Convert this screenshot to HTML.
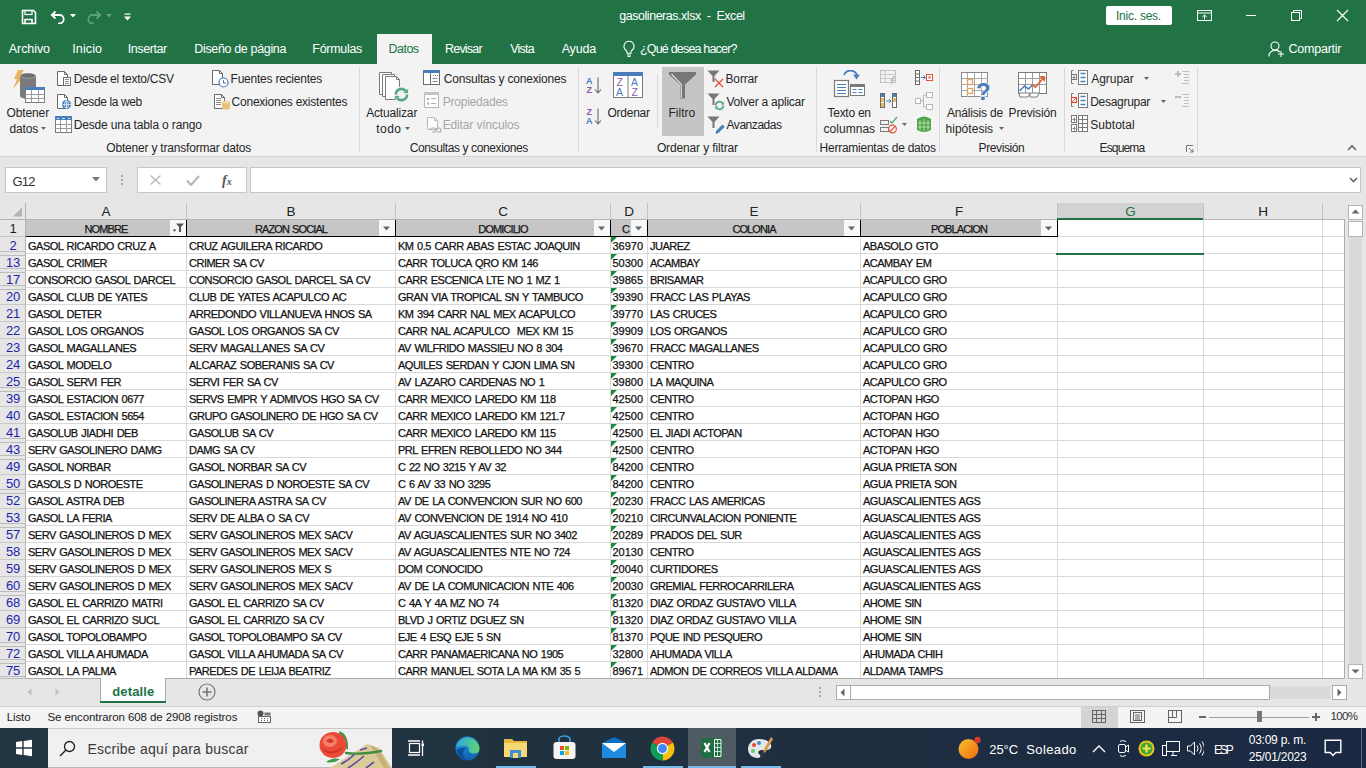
<!DOCTYPE html><html><head><meta charset="utf-8"><style>
*{margin:0;padding:0;box-sizing:border-box}
html,body{width:1366px;height:768px;overflow:hidden;background:#fff;font-family:"Liberation Sans", sans-serif}
.a{position:absolute}
.t{position:absolute;white-space:pre;line-height:1}
.c{position:absolute;white-space:pre;line-height:1;overflow:hidden;font-size:11px;color:#111;-webkit-text-stroke:0.25px #111;letter-spacing:-0.5px;word-spacing:1px}
</style></head><body>
<div class="a" style="left:0px;top:0px;width:1366px;height:64px;background:#217346;"></div>
<svg class="a" style="left:21px;top:9px;" width="16" height="16" viewBox="0 0 16 16"><path d="M1.5 1.5h11l2 2v11h-13z" fill="none" stroke="#fff" stroke-width="1.6"/><rect x="4" y="1.5" width="7" height="4" fill="none" stroke="#fff" stroke-width="1.2"/><path d="M4 14.5v-4h7v4" fill="none" stroke="#fff" stroke-width="1.6"/></svg>
<svg class="a" style="left:50px;top:9px;" width="17" height="15" viewBox="0 0 17 15"><path d="M5.5 2.5L1.8 6l3.7 3.5" fill="none" stroke="#fff" stroke-width="1.8"/><path d="M2 6h7.5a4.2 4.2 0 0 1 0 8.4H8" fill="none" stroke="#fff" stroke-width="1.8"/></svg>
<svg class="a" style="left:70px;top:14px;" width="7" height="4" viewBox="0 0 7 4"><path d="M0 0h6l-3 3.5z" fill="#fff"/></svg>
<svg class="a" style="left:85px;top:9px;" width="17" height="15" viewBox="0 0 17 15"><path d="M11.5 2.5L15.2 6l-3.7 3.5" fill="none" stroke="#5f9f7c" stroke-width="1.8"/><path d="M15 6H7.5a4.2 4.2 0 0 0 0 8.4H9" fill="none" stroke="#5f9f7c" stroke-width="1.8"/></svg>
<svg class="a" style="left:106px;top:14px;" width="7" height="4" viewBox="0 0 7 4"><path d="M0 0h6l-3 3.5z" fill="#5f9f7c"/></svg>
<svg class="a" style="left:124px;top:13px;" width="7" height="8" viewBox="0 0 7 8"><rect x="0.5" y="0.5" width="6" height="1.2" fill="#fff"/><path d="M0 3.5h7l-3.5 4z" fill="#fff"/></svg>
<div class="t" style="left:619.3px;top:10px;font-size:12.5px;color:#fff;letter-spacing:-0.5px;letter-spacing:-0.468px;">gasolineras.xlsx  -  Excel</div>
<div class="a" style="left:1106px;top:6px;width:66px;height:19px;background:#fff;border-radius:2px"></div>
<div class="t" style="left:1116px;top:10px;font-size:12px;color:#217346;letter-spacing:-0.1px;letter-spacing:-0.244px;">Inic. ses.</div>
<svg class="a" style="left:1197px;top:10px;" width="15" height="11" viewBox="0 0 15 11"><rect x="0.5" y="0.5" width="14" height="10" fill="none" stroke="#fff"/><path d="M0.5 3h14" stroke="#fff"/><path d="M7.5 9.5V5M5.3 7.2l2.2-2.2 2.2 2.2" fill="none" stroke="#fff"/></svg>
<div class="a" style="left:1246px;top:15px;width:10px;height:1px;background:#fff;"></div>
<svg class="a" style="left:1291px;top:10px;" width="12" height="11" viewBox="0 0 12 11"><rect x="0.5" y="2.5" width="8" height="8" fill="none" stroke="#fff"/><path d="M2.5 2.5V0.5h8v8h-2" fill="none" stroke="#fff"/></svg>
<svg class="a" style="left:1336px;top:9px;" width="13" height="13" viewBox="0 0 13 13"><path d="M1 1L12 12M12 1L1 12" stroke="#fff" stroke-width="1.1"/></svg>
<div class="a" style="left:377px;top:34px;width:55px;height:30px;background:#f3f3f3;"></div>
<div class="t" style="left:8.8px;top:43px;font-size:12.5px;color:#fff;;letter-spacing:-0.067px;">Archivo</div>
<div class="t" style="left:72.2px;top:43px;font-size:12.5px;color:#fff;;letter-spacing:0.140px;">Inicio</div>
<div class="t" style="left:127.8px;top:43px;font-size:12.5px;color:#fff;;letter-spacing:-0.429px;">Insertar</div>
<div class="t" style="left:194.3px;top:43px;font-size:12.5px;color:#fff;;letter-spacing:-0.347px;">Diseño de página</div>
<div class="t" style="left:312.3px;top:43px;font-size:12.5px;color:#fff;;letter-spacing:-0.300px;">Fórmulas</div>
<div class="t" style="left:445px;top:43px;font-size:12.5px;color:#fff;;letter-spacing:-0.800px;">Revisar</div>
<div class="t" style="left:510.2px;top:43px;font-size:12.5px;color:#fff;;letter-spacing:-0.775px;">Vista</div>
<div class="t" style="left:561.7px;top:43px;font-size:12.5px;color:#fff;;letter-spacing:-0.175px;">Ayuda</div>
<div class="t" style="left:640px;top:43px;font-size:12.5px;color:#fff;;letter-spacing:-0.812px;">¿Qué desea hacer?</div>
<div class="t" style="left:388.5px;top:43px;font-size:12.5px;color:#217346;;letter-spacing:-0.525px;">Datos</div>
<svg class="a" style="left:622px;top:40px;" width="14" height="17" viewBox="0 0 14 17"><path d="M7 1.2a5 5 0 0 0-3 9c.6.5 1 1.2 1 2v1h4v-1c0-.8.4-1.5 1-2a5 5 0 0 0-3-9z" fill="none" stroke="#fff" stroke-width="1.1"/><path d="M5 15h4M5.5 16.5h3" stroke="#fff" stroke-width="1"/></svg>
<svg class="a" style="left:1268px;top:41px;" width="17" height="17" viewBox="0 0 17 17"><circle cx="7" cy="5" r="4" fill="none" stroke="#fff" stroke-width="1.1"/><path d="M0.8 15.5a6.5 6.5 0 0 1 11-4.5" fill="none" stroke="#fff" stroke-width="1.1"/><path d="M13 10v6M10 13h6" stroke="#fff" stroke-width="1.1"/></svg>
<div class="t" style="left:1288.6px;top:43px;font-size:12.5px;color:#fff;letter-spacing:-0.2px;letter-spacing:-0.250px;">Compartir</div>
<div class="a" style="left:0px;top:64px;width:1366px;height:92px;background:#f3f3f3;"></div>
<div class="a" style="left:0px;top:156px;width:1366px;height:1px;background:#d4d4d4;"></div>
<div class="a" style="left:359px;top:68px;width:1px;height:84px;background:#d8d8d8;"></div>
<div class="a" style="left:578px;top:68px;width:1px;height:84px;background:#d8d8d8;"></div>
<div class="a" style="left:816px;top:68px;width:1px;height:84px;background:#d8d8d8;"></div>
<div class="a" style="left:939px;top:68px;width:1px;height:84px;background:#d8d8d8;"></div>
<div class="a" style="left:1064px;top:68px;width:1px;height:84px;background:#d8d8d8;"></div>
<div class="a" style="left:1197px;top:68px;width:1px;height:84px;background:#d8d8d8;"></div>
<div class="a" style="left:657px;top:74px;width:1px;height:55px;background:#d8d8d8;"></div>
<div class="t" style="left:106.3px;top:142px;font-size:12px;color:#262626;letter-spacing:-0.25px;letter-spacing:-0.196px;">Obtener y transformar datos</div>
<div class="t" style="left:409.7px;top:142px;font-size:12px;color:#262626;letter-spacing:-0.25px;letter-spacing:-0.386px;">Consultas y conexiones</div>
<div class="t" style="left:656.9px;top:142px;font-size:12px;color:#262626;letter-spacing:-0.25px;letter-spacing:-0.134px;">Ordenar y filtrar</div>
<div class="t" style="left:819.6px;top:142px;font-size:12px;color:#262626;letter-spacing:-0.25px;letter-spacing:-0.250px;">Herramientas de datos</div>
<div class="t" style="left:978.6px;top:142px;font-size:12px;color:#262626;letter-spacing:-0.25px;letter-spacing:-0.400px;">Previsión</div>
<div class="t" style="left:1099.6px;top:142px;font-size:12px;color:#262626;letter-spacing:-0.25px;letter-spacing:-0.867px;">Esquema</div>
<svg class="a" style="left:1186px;top:145px;" width="8" height="8" viewBox="0 0 8 8"><path d="M0.5 7V0.5H7" fill="none" stroke="#777"/><path d="M3 3l4 4M7 4v3H4" fill="none" stroke="#777"/></svg>
<svg class="a" style="left:1347px;top:144px;" width="10" height="7" viewBox="0 0 10 7"><path d="M1 6l4-4 4 4" fill="none" stroke="#666" stroke-width="1.6"/></svg>
<svg class="a" style="left:11px;top:69px;" width="36" height="35" viewBox="0 0 36 35"><path d="M7 1h6l-4 7h3L2 20l4-10H3z" fill="#e8b55e"/><path d="M9 7v20a8 3 0 0 0 16 0V7z" fill="#7a7a7a"/><ellipse cx="17" cy="7" rx="8" ry="3" fill="#9a9a9a"/><ellipse cx="17" cy="6.6" rx="7" ry="2.2" fill="#6e6e6e"/><rect x="14.5" y="18.5" width="19" height="15" fill="#fff" stroke="#7a7a7a"/><rect x="14" y="18" width="20" height="3" fill="#4a7ebb"/><path d="M14.5 25.5h19M14.5 29.5h19M20.5 21v12.5M27.5 21v12.5" stroke="#9a9a9a" stroke-width="1"/></svg>
<div class="t" style="left:6.6px;top:107px;font-size:12px;color:#262626;letter-spacing:-0.25px;letter-spacing:-0.133px;">Obtener</div>
<div class="t" style="left:9.5px;top:123px;font-size:12px;color:#262626;letter-spacing:-0.25px;letter-spacing:-0.175px;">datos</div>
<svg class="a" style="left:41px;top:127px;" width="6" height="4" viewBox="0 0 6 4"><path d="M0 0h5l-2.5 3z" fill="#666"/></svg>
<svg class="a" style="left:56px;top:70px;" width="16" height="17" viewBox="0 0 16 17"><path d="M1.5 1.5h7l3 3v11h-10z" fill="#fff" stroke="#6a6a6a"/><path d="M8.5 1.5v3h3" fill="none" stroke="#6a6a6a"/><rect x="7.5" y="7.5" width="7" height="8" fill="#fff" stroke="#6a6a6a"/><path d="M9 9.5h4M9 11.5h4M9 13.5h4" stroke="#8a8a8a"/></svg>
<div class="t" style="left:73.7px;top:73px;font-size:12px;color:#262626;letter-spacing:-0.25px;letter-spacing:-0.265px;">Desde el texto/CSV</div>
<svg class="a" style="left:56px;top:93px;" width="16" height="17" viewBox="0 0 16 17"><path d="M1.5 1.5h7l3 3v11h-10z" fill="#fff" stroke="#6a6a6a"/><path d="M8.5 1.5v3h3" fill="none" stroke="#6a6a6a"/><circle cx="10.5" cy="11.5" r="4.5" fill="#4a7ebb"/><path d="M6.5 11.5h8M10.5 7.5v8" stroke="#cfe0f3" stroke-width="1"/><ellipse cx="10.5" cy="11.5" rx="2" ry="3.6" fill="none" stroke="#cfe0f3" stroke-width="0.9"/></svg>
<div class="t" style="left:73.7px;top:96px;font-size:12px;color:#262626;letter-spacing:-0.25px;letter-spacing:-0.382px;">Desde la web</div>
<svg class="a" style="left:55px;top:116px;" width="17" height="17" viewBox="0 0 17 17"><rect x="0.5" y="0.5" width="16" height="16" fill="#fff" stroke="#7a7a7a"/><rect x="0" y="0" width="17" height="4" fill="#4a7ebb"/><path d="M0.5 8.5h16M0.5 12.5h16M5.5 4v12.5M11.5 4v12.5" stroke="#9a9a9a"/><path d="M2 2.5h2M7 2.5h3M13 2.5h2" stroke="#cfe0f3"/></svg>
<div class="t" style="left:73.7px;top:119px;font-size:12px;color:#262626;letter-spacing:-0.25px;letter-spacing:-0.145px;">Desde una tabla o rango</div>
<svg class="a" style="left:211px;top:69px;" width="18" height="19" viewBox="0 0 18 19"><path d="M1.5 1.5h7l3 3v11h-10z" fill="#fff" stroke="#6a6a6a"/><path d="M8.5 1.5v3h3" fill="none" stroke="#6a6a6a"/><circle cx="12.5" cy="13.5" r="4.5" fill="#fff" stroke="#4a7ebb" stroke-width="1.2"/><path d="M12.5 11v3h2.5" fill="none" stroke="#4a7ebb"/></svg>
<div class="t" style="left:230.6px;top:73px;font-size:12px;color:#262626;letter-spacing:-0.25px;letter-spacing:-0.237px;">Fuentes recientes</div>
<svg class="a" style="left:213px;top:93px;" width="17" height="17" viewBox="0 0 17 17"><path d="M1.5 1.5h7l3 3v11h-10z" fill="#fff" stroke="#6a6a6a"/><path d="M8.5 1.5v3h3" fill="none" stroke="#6a6a6a"/><path d="M3 5.5h5M3 7.5h5M3 9.5h5M3 11.5h5" stroke="#8a8a8a"/><path d="M9 9v6a4 1.5 0 0 0 8 0V9z" fill="#e6c27a"/><ellipse cx="13" cy="9" rx="4" ry="1.5" fill="#f0d69a"/></svg>
<div class="t" style="left:231.6px;top:96px;font-size:12px;color:#262626;letter-spacing:-0.25px;letter-spacing:-0.240px;">Conexiones existentes</div>
<svg class="a" style="left:378px;top:71px;" width="32" height="32" viewBox="0 0 32 32"><path d="M1.5 1.5h12v22h-12z" fill="#fff" stroke="#7a7a7a"/><path d="M4.5 3.5h12v22h-12z" fill="#fff" stroke="#7a7a7a"/><path d="M7.5 5.5h11l3 3v20h-14z" fill="#fff" stroke="#7a7a7a"/><path d="M18.5 5.5v3h3" fill="none" stroke="#7a7a7a"/><circle cx="23.5" cy="23.5" r="8" fill="#f3f3f3"/><path d="M17.90 23.50A5.6 5.6 0 0 1 27.79 19.90" fill="none" stroke="#5aa882" stroke-width="2.6"/><path d="M29.85 22.35L30.24 17.84L25.34 21.96z" fill="#5aa882"/><path d="M29.10 23.50A5.6 5.6 0 0 1 19.21 27.10" fill="none" stroke="#5aa882" stroke-width="2.6"/><path d="M17.15 24.65L16.76 29.16L21.66 25.04z" fill="#5aa882"/></svg>
<div class="t" style="left:366.2px;top:107px;font-size:12px;color:#262626;letter-spacing:-0.25px;letter-spacing:-0.167px;">Actualizar</div>
<div class="t" style="left:376.2px;top:123px;font-size:12px;color:#262626;letter-spacing:-0.25px;letter-spacing:0.467px;">todo</div>
<svg class="a" style="left:405px;top:127px;" width="6" height="4" viewBox="0 0 6 4"><path d="M0 0h5l-2.5 3z" fill="#666"/></svg>
<svg class="a" style="left:423px;top:70px;" width="18" height="16" viewBox="0 0 18 16"><rect x="0.5" y="0.5" width="16" height="14" fill="#fff" stroke="#6a6a6a"/><rect x="0" y="0" width="17" height="3" fill="#4a7ebb"/><path d="M7.5 3v12" stroke="#6a6a6a"/><path d="M10 5.5h1M12 5.5h1M14 5.5h1M9.5 8.5h5M9.5 11.5h5" stroke="#8a8a8a"/></svg>
<div class="t" style="left:443.7px;top:73px;font-size:12px;color:#262626;letter-spacing:-0.25px;letter-spacing:-0.190px;">Consultas y conexiones</div>
<svg class="a" style="left:424px;top:92px;" width="16" height="17" viewBox="0 0 16 17"><rect x="0.5" y="0.5" width="14" height="15" fill="#fff" stroke="#b8b8b8"/><rect x="0" y="0" width="15" height="3" fill="#c4c4c4"/><circle cx="4" cy="7" r="1.2" fill="#b0b0b0"/><circle cx="4" cy="11.5" r="1.2" fill="#b0b0b0"/><path d="M7 6.5h5M7 11.5h5" stroke="#b0b0b0"/></svg>
<div class="t" style="left:442.7px;top:96px;font-size:12px;color:#a6a6a6;letter-spacing:-0.25px;letter-spacing:-0.220px;">Propiedades</div>
<svg class="a" style="left:426px;top:116px;" width="16" height="17" viewBox="0 0 16 17"><path d="M1.5 1.5h7l3 3v9h-10z" fill="#fff" stroke="#b8b8b8"/><path d="M8.5 1.5v3h3" fill="none" stroke="#b8b8b8"/><path d="M4 14a2 2 0 0 1 2-2h2a2 2 0 0 1 0 4H6M10 14a2 2 0 0 1 2-2h1a2 2 0 0 1 0 4h-2" fill="none" stroke="#b0b0b0" stroke-width="1.1"/></svg>
<div class="t" style="left:442.7px;top:119px;font-size:12px;color:#a6a6a6;letter-spacing:-0.25px;letter-spacing:-0.136px;">Editar vínculos</div>
<svg class="a" style="left:586px;top:76px;" width="16" height="19" viewBox="0 0 16 19"><text x="0" y="8" font-family="Liberation Sans" font-size="9" font-weight="bold" fill="#4a7ebb">A</text><text x="0.5" y="17" font-family="Liberation Sans" font-size="9" font-weight="bold" fill="#8e58a8">Z</text><path d="M12 1.5v15M9 13.5l3 3.5 3-3.5" fill="none" stroke="#6a6a6a" stroke-width="1.1"/></svg>
<svg class="a" style="left:586px;top:107px;" width="16" height="19" viewBox="0 0 16 19"><text x="0.5" y="8" font-family="Liberation Sans" font-size="9" font-weight="bold" fill="#8e58a8">Z</text><text x="0" y="17" font-family="Liberation Sans" font-size="9" font-weight="bold" fill="#4a7ebb">A</text><path d="M12 1.5v15M9 13.5l3 3.5 3-3.5" fill="none" stroke="#6a6a6a" stroke-width="1.1"/></svg>
<svg class="a" style="left:613px;top:72px;" width="31" height="27" viewBox="0 0 31 27"><rect x="0.5" y="0.5" width="29" height="25" fill="#fff" stroke="#7a7a7a"/><rect x="0" y="0" width="30" height="4" fill="#4a7ebb"/><path d="M15 4v22" stroke="#7a7a7a"/><text x="3.5" y="14" font-family="Liberation Sans" font-size="10.5" fill="#8e58a8">Z</text><text x="3" y="24" font-family="Liberation Sans" font-size="10.5" fill="#4a7ebb">A</text><text x="18" y="14" font-family="Liberation Sans" font-size="10.5" fill="#4a7ebb">A</text><text x="18.5" y="24" font-family="Liberation Sans" font-size="10.5" fill="#8e58a8">Z</text></svg>
<div class="t" style="left:607.5px;top:107px;font-size:12px;color:#262626;letter-spacing:-0.25px;letter-spacing:-0.250px;">Ordenar</div>
<div class="a" style="left:662px;top:67px;width:42px;height:69px;background:#c5c5c5;"></div>
<svg class="a" style="left:668px;top:71px;" width="29" height="29" viewBox="0 0 29 29"><path d="M1 1h27v2.5L17 13.6V27.5h-5V13.6L1 3.5z" fill="#777"/><path d="M3.5 3.2L13.2 13.2V27" fill="none" stroke="#f0f0f0" stroke-width="1.1"/></svg>
<div class="t" style="left:668.4px;top:107px;font-size:12px;color:#262626;letter-spacing:-0.25px;letter-spacing:0.040px;">Filtro</div>
<svg class="a" style="left:707px;top:70px;" width="18" height="18" viewBox="0 0 18 18"><path d="M0.5 0.5h12l-5 5.5v6h-2V6z" fill="#777"/><path d="M8 9l8 8M16 9l-8 8" stroke="#e0533b" stroke-width="1.4"/></svg>
<div class="t" style="left:725.5px;top:73px;font-size:12px;color:#262626;letter-spacing:-0.25px;letter-spacing:-0.150px;">Borrar</div>
<svg class="a" style="left:707px;top:93px;" width="19" height="19" viewBox="0 0 19 19"><path d="M0.5 0.5h12l-5 5.5v6h-2V6z" fill="#777"/><path d="M8.70 12.50A3.8 3.8 0 0 1 15.41 10.06" fill="none" stroke="#5aa882" stroke-width="1.8"/><path d="M16.83 11.74L17.10 8.64L13.73 11.47z" fill="#5aa882"/><path d="M16.30 12.50A3.8 3.8 0 0 1 9.59 14.94" fill="none" stroke="#5aa882" stroke-width="1.8"/><path d="M8.17 13.26L7.90 16.36L11.27 13.53z" fill="#5aa882"/></svg>
<div class="t" style="left:726.5px;top:96px;font-size:12px;color:#262626;letter-spacing:-0.25px;letter-spacing:-0.233px;">Volver a aplicar</div>
<svg class="a" style="left:707px;top:116px;" width="18" height="18" viewBox="0 0 18 18"><path d="M0.5 0.5h12l-5 5.5v6h-2V6z" fill="#777"/><path d="M9.5 14.5l6-6 2.2 2.2-6 6z" fill="#4a7ebb"/><path d="M9.5 14.5l2.2 2.2-3.2 1z" fill="#2f5f9a"/></svg>
<div class="t" style="left:726.5px;top:119px;font-size:12px;color:#262626;letter-spacing:-0.25px;letter-spacing:-0.450px;">Avanzadas</div>
<svg class="a" style="left:832px;top:70px;" width="35" height="29" viewBox="0 0 35 29"><path d="M12 5a7 7 0 0 1 13 0" fill="none" stroke="#4a7ebb" stroke-width="2"/><path d="M21 4.5h7l-3.5 5z" fill="#4a7ebb"/><rect x="2.5" y="10.5" width="14" height="16" fill="#fff" stroke="#7a7a7a" stroke-width="1.2"/><path d="M5 14.5h9M5 17.5h9M5 20.5h9M5 23.5h9" stroke="#4a7ebb"/><rect x="18.5" y="14.5" width="14" height="11" fill="#fff" stroke="#7a7a7a"/><rect x="18" y="14" width="15" height="3" fill="#7a7a7a"/><path d="M20.5 19.5h4M26.5 19.5h4M20.5 22.5h4M26.5 22.5h4" stroke="#4a7ebb"/></svg>
<div class="t" style="left:827.5px;top:107px;font-size:12px;color:#262626;letter-spacing:-0.25px;letter-spacing:-0.271px;">Texto en</div>
<div class="t" style="left:823.5px;top:123px;font-size:12px;color:#262626;letter-spacing:-0.25px;letter-spacing:0.036px;">columnas</div>
<svg class="a" style="left:880px;top:70px;" width="18" height="17" viewBox="0 0 18 17"><rect x="0.5" y="0.5" width="15" height="12" fill="none" stroke="#c0c0c0"/><path d="M0.5 4.5h15M0.5 8.5h15M5 1v12" stroke="#c8c8c8"/><path d="M13 6l-3 5h2l-2 5 5-6h-2l2-4z" fill="#c0c0c0"/></svg>
<svg class="a" style="left:880px;top:93px;" width="18" height="16" viewBox="0 0 18 16"><rect x="0.5" y="0.5" width="4" height="14" fill="#fff" stroke="#6a6a6a"/><rect x="1" y="1" width="3" height="3" fill="#4a7ebb"/><rect x="1" y="5" width="3" height="4" fill="#e6b86a"/><rect x="1" y="10" width="3" height="4" fill="#e6b86a"/><rect x="12.5" y="0.5" width="4" height="14" fill="#fff" stroke="#6a6a6a"/><rect x="13" y="1" width="3" height="3" fill="#4a7ebb"/><rect x="13" y="5" width="3" height="4" fill="#e6b86a"/><path d="M6 8h5M9 6l2 2-2 2" fill="none" stroke="#4a7ebb"/></svg>
<svg class="a" style="left:880px;top:116px;" width="18" height="18" viewBox="0 0 18 18"><rect x="0.5" y="4.5" width="8" height="4" fill="none" stroke="#7a7a7a"/><rect x="0.5" y="11.5" width="8" height="4" fill="none" stroke="#7a7a7a"/><path d="M10 5l2 2 5-6" fill="none" stroke="#5aa882" stroke-width="1.4"/><circle cx="12.5" cy="13" r="3.8" fill="#fff" stroke="#e0533b" stroke-width="1.3"/><path d="M10 15.5l5-5" stroke="#e0533b" stroke-width="1.3"/></svg>
<svg class="a" style="left:902px;top:123px;" width="6" height="4" viewBox="0 0 6 4"><path d="M0 0h5l-2.5 3z" fill="#666"/></svg>
<svg class="a" style="left:915px;top:70px;" width="18" height="16" viewBox="0 0 18 16"><rect x="0.5" y="0.5" width="4" height="14" fill="#fff" stroke="#6a6a6a"/><path d="M0.5 4h4M0.5 7.5h4M0.5 11h4" stroke="#6a6a6a"/><path d="M6 7.5h4M8.5 5.5l2 2-2 2" fill="none" stroke="#4a7ebb"/><rect x="11.5" y="4.5" width="6" height="6" fill="#fff" stroke="#e0533b"/><rect x="13.5" y="6.5" width="2" height="2" fill="#e0533b"/></svg>
<svg class="a" style="left:915px;top:92px;" width="18" height="18" viewBox="0 0 18 18"><rect x="0.5" y="6.5" width="5" height="5" fill="#fff" stroke="#b8b8b8"/><rect x="11.5" y="0.5" width="6" height="5" fill="#fff" stroke="#b8b8b8"/><rect x="11.5" y="12.5" width="6" height="5" fill="#fff" stroke="#b8b8b8"/><path d="M5.5 9h3M8.5 3v12M8.5 3h3M8.5 15h3" fill="none" stroke="#b8b8b8"/></svg>
<svg class="a" style="left:915px;top:115px;" width="18" height="18" viewBox="0 0 18 18"><path d="M2 4Q9 -1 16 4V15Q9 19 2 15z" fill="#4ea24a"/><path d="M5 5v10M9 4v12M13 5v10M3 8h12M3 12h12" stroke="#bfe3b5" stroke-width="0.9"/></svg>
<svg class="a" style="left:961px;top:72px;" width="31" height="31" viewBox="0 0 31 31"><rect x="0.5" y="0.5" width="26" height="24" fill="#fff" stroke="#8a8a8a"/><path d="M0.5 6.5h26M0.5 12.5h26M0.5 18.5h26M6.5 1v24M13.5 1v24M20.5 1v24" stroke="#a8a8a8"/><rect x="6.5" y="7.5" width="5" height="5" fill="#fff" stroke="#e6a15a" stroke-width="1.3"/><rect x="6.5" y="16.5" width="5" height="5" fill="#fff" stroke="#e6a15a" stroke-width="1.3"/><text x="15" y="28" font-family="Liberation Sans" font-weight="bold" font-size="24" fill="#4a7ebb" stroke="#f3f3f3" stroke-width="1.5" paint-order="stroke">?</text></svg>
<div class="t" style="left:946.9px;top:107px;font-size:12px;color:#262626;letter-spacing:-0.25px;letter-spacing:-0.180px;">Análisis de</div>
<div class="t" style="left:945.5px;top:123px;font-size:12px;color:#262626;letter-spacing:-0.25px;letter-spacing:0.031px;">hipótesis</div>
<svg class="a" style="left:999px;top:127px;" width="6" height="4" viewBox="0 0 6 4"><path d="M0 0h5l-2.5 3z" fill="#666"/></svg>
<svg class="a" style="left:1018px;top:72px;" width="31" height="27" viewBox="0 0 31 27"><rect x="0.5" y="0.5" width="28" height="21" fill="#fff" stroke="#7a7a7a"/><path d="M0.5 6.5h28M0.5 12.5h28M7.5 1v21M14.5 1v21M21.5 1v21" stroke="#9a9a9a"/><path d="M1 21h11l-2 4H2z" fill="#fff" stroke="#7a7a7a"/><path d="M12 21h9l-2 4h-7z" fill="#fff" stroke="#7a7a7a"/><path d="M1.5 19l5-5 4 3 4-4" fill="none" stroke="#4a7ebb" stroke-width="1.6"/><path d="M14.5 13l3 2 7-8" fill="none" stroke="#e0663b" stroke-width="1.8"/><path d="M21 4h6v6z" fill="#e0663b"/></svg>
<div class="t" style="left:1008.6px;top:107px;font-size:12px;color:#262626;letter-spacing:-0.25px;letter-spacing:-0.169px;">Previsión</div>
<svg class="a" style="left:1071px;top:70px;" width="18" height="16" viewBox="0 0 18 16"><path d="M2.5 0.5h-2v13h2M0.5 0.5" fill="none" stroke="#7a7a7a"/><rect x="0.5" y="4.5" width="5" height="5" fill="#fff" stroke="#7a7a7a"/><path d="M1.5 7.5h3M3 5.5v4" stroke="#7a7a7a"/><rect x="7.5" y="0.5" width="9" height="14" fill="#fff" stroke="#7a7a7a"/><path d="M9.5 3.5h5M9.5 7.5h5M9.5 11.5h5" stroke="#4a7ebb" stroke-width="1.3"/></svg>
<div class="t" style="left:1091.25px;top:73px;font-size:12px;color:#262626;letter-spacing:-0.25px;letter-spacing:-0.042px;">Agrupar</div>
<svg class="a" style="left:1144px;top:77px;" width="6" height="4" viewBox="0 0 6 4"><path d="M0 0h5l-2.5 3z" fill="#666"/></svg>
<svg class="a" style="left:1071px;top:93px;" width="18" height="16" viewBox="0 0 18 16"><path d="M2.5 0.5h-2v13h2" fill="none" stroke="#7a7a7a"/><rect x="0.5" y="4.5" width="5" height="5" fill="#fff" stroke="#e0533b" stroke-width="1.2"/><path d="M1 9l4-4" stroke="#e0533b"/><rect x="7.5" y="0.5" width="9" height="14" fill="#fff" stroke="#7a7a7a"/><path d="M9.5 3.5h5M9.5 7.5h5M9.5 11.5h5" stroke="#4a7ebb" stroke-width="1.3"/></svg>
<div class="t" style="left:1090.25px;top:96px;font-size:12px;color:#262626;letter-spacing:-0.25px;letter-spacing:-0.294px;">Desagrupar</div>
<svg class="a" style="left:1161px;top:100px;" width="6" height="4" viewBox="0 0 6 4"><path d="M0 0h5l-2.5 3z" fill="#666"/></svg>
<svg class="a" style="left:1071px;top:115px;" width="18" height="18" viewBox="0 0 18 18"><rect x="0.5" y="0.5" width="5" height="7" fill="#fff" stroke="#7a7a7a"/><rect x="0.5" y="9.5" width="5" height="7" fill="#fff" stroke="#7a7a7a"/><path d="M1.5 4.5h3M3.5 2.5v4M1.5 13.5h3M3.5 11.5v4" stroke="#7a7a7a"/><rect x="7.5" y="0.5" width="9" height="16" fill="#fff" stroke="#7a7a7a"/><path d="M7.5 4.5h9M7.5 8.5h9M7.5 12.5h9M11.5 1v16" stroke="#7a7a7a"/></svg>
<div class="t" style="left:1090.25px;top:119px;font-size:12px;color:#262626;letter-spacing:-0.25px;letter-spacing:0.050px;">Subtotal</div>
<svg class="a" style="left:1174px;top:70px;" width="16" height="16" viewBox="0 0 16 16"><path d="M1 4h6M4 1v6" stroke="#b0b0b0" stroke-width="1.6"/><path d="M8 1.5h7M10 4.5h5M10 7.5h5M10 10.5h5M8 13.5h7" stroke="#c0c0c0"/></svg>
<svg class="a" style="left:1174px;top:93px;" width="16" height="16" viewBox="0 0 16 16"><path d="M1 4h6" stroke="#b0b0b0" stroke-width="1.6"/><path d="M8 1.5h7M10 4.5h5M10 7.5h5M10 10.5h5M8 13.5h7" stroke="#c0c0c0"/></svg>
<div class="a" style="left:0px;top:157px;width:1366px;height:46px;background:#e6e6e6;"></div>
<div class="a" style="left:5px;top:167px;width:102px;height:26px;background:#fff;border:1px solid #c6c6c6"></div>
<div class="t" style="left:12.4px;top:175px;font-size:13px;color:#333;;letter-spacing:-0.750px;">G12</div>
<svg class="a" style="left:92px;top:177px;" width="9" height="5" viewBox="0 0 9 5"><path d="M0 0h8l-4 4.5z" fill="#777"/></svg>
<div class="a" style="left:121px;top:175px;width:2px;height:2px;background:#a8a8a8;"></div>
<div class="a" style="left:121px;top:179px;width:2px;height:2px;background:#a8a8a8;"></div>
<div class="a" style="left:121px;top:183px;width:2px;height:2px;background:#a8a8a8;"></div>
<div class="a" style="left:137px;top:167px;width:110px;height:26px;background:#fff;border:1px solid #c6c6c6"></div>
<svg class="a" style="left:150px;top:175px;" width="11" height="10" viewBox="0 0 11 10"><path d="M0.5 0.5l10 9M10.5 0.5l-10 9" stroke="#b4b4b4" stroke-width="1.2"/></svg>
<svg class="a" style="left:186px;top:175px;" width="14" height="11" viewBox="0 0 14 11"><path d="M1 5.5l4 4.5L13 1" fill="none" stroke="#b4b4b4" stroke-width="2"/></svg>
<div class="t" style="left:222px;top:174px;font-size:14px;color:#555;font-family:'Liberation Serif';font-style:italic;font-weight:bold;">f<span style="font-size:10px">x</span></div>
<div class="a" style="left:250px;top:167px;width:1111px;height:26px;background:#fff;border:1px solid #c6c6c6"></div>
<svg class="a" style="left:1349px;top:177px;" width="9" height="6" viewBox="0 0 9 6"><path d="M1 1l3.5 3.5L8 1" fill="none" stroke="#666" stroke-width="1.6"/></svg>
<div class="a" style="left:0px;top:203px;width:1345px;height:16px;background:#e6e6e6;"></div>
<div class="a" style="left:1057px;top:203px;width:146px;height:16px;background:#d2d2d2;"></div>
<div class="a" style="left:0px;top:219px;width:1345px;height:1px;background:#b4b4b4;"></div>
<svg class="a" style="left:12px;top:207px;" width="11" height="10" viewBox="0 0 11 10"><path d="M10 0.5V9.5H1z" fill="#b4b4b4"/></svg>
<div class="a" style="left:186px;top:203px;width:1px;height:16px;background:#c3c3c3;"></div>
<div class="a" style="left:395px;top:203px;width:1px;height:16px;background:#c3c3c3;"></div>
<div class="a" style="left:610px;top:203px;width:1px;height:16px;background:#c3c3c3;"></div>
<div class="a" style="left:647px;top:203px;width:1px;height:16px;background:#c3c3c3;"></div>
<div class="a" style="left:860px;top:203px;width:1px;height:16px;background:#c3c3c3;"></div>
<div class="a" style="left:1057px;top:203px;width:1px;height:16px;background:#c3c3c3;"></div>
<div class="a" style="left:1203px;top:203px;width:1px;height:16px;background:#c3c3c3;"></div>
<div class="a" style="left:1322px;top:203px;width:1px;height:16px;background:#c3c3c3;"></div>
<div class="t" style="left:26px;top:205px;font-size:13.5px;color:#222;width:160px;text-align:center;">A</div>
<div class="t" style="left:187px;top:205px;font-size:13.5px;color:#222;width:208px;text-align:center;">B</div>
<div class="t" style="left:396px;top:205px;font-size:13.5px;color:#222;width:214px;text-align:center;">C</div>
<div class="t" style="left:611px;top:205px;font-size:13.5px;color:#222;width:36px;text-align:center;">D</div>
<div class="t" style="left:648px;top:205px;font-size:13.5px;color:#222;width:212px;text-align:center;">E</div>
<div class="t" style="left:861px;top:205px;font-size:13.5px;color:#222;width:196px;text-align:center;">F</div>
<div class="t" style="left:1058px;top:205px;font-size:13.5px;color:#217346;width:145px;text-align:center;">G</div>
<div class="t" style="left:1204px;top:205px;font-size:13.5px;color:#222;width:118px;text-align:center;">H</div>
<div class="a" style="left:1057px;top:218px;width:146px;height:2px;background:#217346;"></div>
<div class="a" style="left:0px;top:220px;width:25px;height:459px;background:#e6e6e6;"></div>
<div class="a" style="left:25px;top:203px;width:1px;height:476px;background:#b4b4b4;"></div>
<div class="a" style="left:26px;top:220px;width:1318px;height:458px;background:#fff;"></div>
<div class="a" style="left:1344px;top:219px;width:1px;height:460px;background:#ababab;"></div>
<div class="a" style="left:26px;top:678px;width:1319px;height:1px;background:#ababab;"></div>
<div class="a" style="left:0px;top:678px;width:26px;height:1px;background:#bcbcbc;"></div>
<div class="a" style="left:26px;top:236px;width:1318px;height:1px;background:#d9d9d9;"></div>
<div class="a" style="left:0px;top:236px;width:25px;height:1px;background:#c8c8c8;"></div>
<div class="a" style="left:26px;top:253px;width:1318px;height:1px;background:#d9d9d9;"></div>
<div class="a" style="left:0px;top:251px;width:25px;height:1px;background:#bcbcbc;"></div>
<div class="a" style="left:0px;top:255px;width:25px;height:1px;background:#bcbcbc;"></div>
<div class="a" style="left:26px;top:270px;width:1318px;height:1px;background:#d9d9d9;"></div>
<div class="a" style="left:0px;top:268px;width:25px;height:1px;background:#bcbcbc;"></div>
<div class="a" style="left:0px;top:272px;width:25px;height:1px;background:#bcbcbc;"></div>
<div class="a" style="left:26px;top:287px;width:1318px;height:1px;background:#d9d9d9;"></div>
<div class="a" style="left:0px;top:285px;width:25px;height:1px;background:#bcbcbc;"></div>
<div class="a" style="left:0px;top:289px;width:25px;height:1px;background:#bcbcbc;"></div>
<div class="a" style="left:26px;top:304px;width:1318px;height:1px;background:#d9d9d9;"></div>
<div class="a" style="left:0px;top:304px;width:25px;height:1px;background:#c8c8c8;"></div>
<div class="a" style="left:26px;top:321px;width:1318px;height:1px;background:#d9d9d9;"></div>
<div class="a" style="left:0px;top:321px;width:25px;height:1px;background:#c8c8c8;"></div>
<div class="a" style="left:26px;top:338px;width:1318px;height:1px;background:#d9d9d9;"></div>
<div class="a" style="left:0px;top:338px;width:25px;height:1px;background:#c8c8c8;"></div>
<div class="a" style="left:26px;top:355px;width:1318px;height:1px;background:#d9d9d9;"></div>
<div class="a" style="left:0px;top:355px;width:25px;height:1px;background:#c8c8c8;"></div>
<div class="a" style="left:26px;top:372px;width:1318px;height:1px;background:#d9d9d9;"></div>
<div class="a" style="left:0px;top:372px;width:25px;height:1px;background:#c8c8c8;"></div>
<div class="a" style="left:26px;top:389px;width:1318px;height:1px;background:#d9d9d9;"></div>
<div class="a" style="left:0px;top:387px;width:25px;height:1px;background:#bcbcbc;"></div>
<div class="a" style="left:0px;top:391px;width:25px;height:1px;background:#bcbcbc;"></div>
<div class="a" style="left:26px;top:406px;width:1318px;height:1px;background:#d9d9d9;"></div>
<div class="a" style="left:0px;top:406px;width:25px;height:1px;background:#c8c8c8;"></div>
<div class="a" style="left:26px;top:423px;width:1318px;height:1px;background:#d9d9d9;"></div>
<div class="a" style="left:0px;top:423px;width:25px;height:1px;background:#c8c8c8;"></div>
<div class="a" style="left:26px;top:440px;width:1318px;height:1px;background:#d9d9d9;"></div>
<div class="a" style="left:0px;top:438px;width:25px;height:1px;background:#bcbcbc;"></div>
<div class="a" style="left:0px;top:442px;width:25px;height:1px;background:#bcbcbc;"></div>
<div class="a" style="left:26px;top:457px;width:1318px;height:1px;background:#d9d9d9;"></div>
<div class="a" style="left:0px;top:455px;width:25px;height:1px;background:#bcbcbc;"></div>
<div class="a" style="left:0px;top:459px;width:25px;height:1px;background:#bcbcbc;"></div>
<div class="a" style="left:26px;top:474px;width:1318px;height:1px;background:#d9d9d9;"></div>
<div class="a" style="left:0px;top:474px;width:25px;height:1px;background:#c8c8c8;"></div>
<div class="a" style="left:26px;top:491px;width:1318px;height:1px;background:#d9d9d9;"></div>
<div class="a" style="left:0px;top:489px;width:25px;height:1px;background:#bcbcbc;"></div>
<div class="a" style="left:0px;top:493px;width:25px;height:1px;background:#bcbcbc;"></div>
<div class="a" style="left:26px;top:508px;width:1318px;height:1px;background:#d9d9d9;"></div>
<div class="a" style="left:0px;top:508px;width:25px;height:1px;background:#c8c8c8;"></div>
<div class="a" style="left:26px;top:525px;width:1318px;height:1px;background:#d9d9d9;"></div>
<div class="a" style="left:0px;top:523px;width:25px;height:1px;background:#bcbcbc;"></div>
<div class="a" style="left:0px;top:527px;width:25px;height:1px;background:#bcbcbc;"></div>
<div class="a" style="left:26px;top:542px;width:1318px;height:1px;background:#d9d9d9;"></div>
<div class="a" style="left:0px;top:542px;width:25px;height:1px;background:#c8c8c8;"></div>
<div class="a" style="left:26px;top:559px;width:1318px;height:1px;background:#d9d9d9;"></div>
<div class="a" style="left:0px;top:559px;width:25px;height:1px;background:#c8c8c8;"></div>
<div class="a" style="left:26px;top:576px;width:1318px;height:1px;background:#d9d9d9;"></div>
<div class="a" style="left:0px;top:576px;width:25px;height:1px;background:#c8c8c8;"></div>
<div class="a" style="left:26px;top:593px;width:1318px;height:1px;background:#d9d9d9;"></div>
<div class="a" style="left:0px;top:591px;width:25px;height:1px;background:#bcbcbc;"></div>
<div class="a" style="left:0px;top:595px;width:25px;height:1px;background:#bcbcbc;"></div>
<div class="a" style="left:26px;top:610px;width:1318px;height:1px;background:#d9d9d9;"></div>
<div class="a" style="left:0px;top:610px;width:25px;height:1px;background:#c8c8c8;"></div>
<div class="a" style="left:26px;top:627px;width:1318px;height:1px;background:#d9d9d9;"></div>
<div class="a" style="left:0px;top:627px;width:25px;height:1px;background:#c8c8c8;"></div>
<div class="a" style="left:26px;top:644px;width:1318px;height:1px;background:#d9d9d9;"></div>
<div class="a" style="left:0px;top:642px;width:25px;height:1px;background:#bcbcbc;"></div>
<div class="a" style="left:0px;top:646px;width:25px;height:1px;background:#bcbcbc;"></div>
<div class="a" style="left:26px;top:661px;width:1318px;height:1px;background:#d9d9d9;"></div>
<div class="a" style="left:0px;top:659px;width:25px;height:1px;background:#bcbcbc;"></div>
<div class="a" style="left:0px;top:663px;width:25px;height:1px;background:#bcbcbc;"></div>
<div class="a" style="left:0px;top:676px;width:25px;height:1px;background:#bcbcbc;"></div>
<div class="a" style="left:0px;top:680px;width:25px;height:1px;background:#bcbcbc;"></div>
<div class="a" style="left:186px;top:220px;width:1px;height:458px;background:#d9d9d9;"></div>
<div class="a" style="left:395px;top:220px;width:1px;height:458px;background:#d9d9d9;"></div>
<div class="a" style="left:610px;top:220px;width:1px;height:458px;background:#d9d9d9;"></div>
<div class="a" style="left:647px;top:220px;width:1px;height:458px;background:#d9d9d9;"></div>
<div class="a" style="left:860px;top:220px;width:1px;height:458px;background:#d9d9d9;"></div>
<div class="a" style="left:1057px;top:220px;width:1px;height:458px;background:#d9d9d9;"></div>
<div class="a" style="left:1203px;top:220px;width:1px;height:458px;background:#d9d9d9;"></div>
<div class="a" style="left:1322px;top:220px;width:1px;height:458px;background:#d9d9d9;"></div>
<div class="t" style="left:0px;top:222px;font-size:13px;color:#222;width:26px;text-align:center;">1</div>
<div class="t" style="left:0px;top:239px;font-size:13px;color:#1f1fae;width:26px;text-align:center;letter-spacing:-0.3px;">2</div>
<div class="t" style="left:0px;top:256px;font-size:13px;color:#1f1fae;width:26px;text-align:center;letter-spacing:-0.3px;">13</div>
<div class="t" style="left:0px;top:273px;font-size:13px;color:#1f1fae;width:26px;text-align:center;letter-spacing:-0.3px;">17</div>
<div class="t" style="left:0px;top:290px;font-size:13px;color:#1f1fae;width:26px;text-align:center;letter-spacing:-0.3px;">20</div>
<div class="t" style="left:0px;top:307px;font-size:13px;color:#1f1fae;width:26px;text-align:center;letter-spacing:-0.3px;">21</div>
<div class="t" style="left:0px;top:324px;font-size:13px;color:#1f1fae;width:26px;text-align:center;letter-spacing:-0.3px;">22</div>
<div class="t" style="left:0px;top:341px;font-size:13px;color:#1f1fae;width:26px;text-align:center;letter-spacing:-0.3px;">23</div>
<div class="t" style="left:0px;top:358px;font-size:13px;color:#1f1fae;width:26px;text-align:center;letter-spacing:-0.3px;">24</div>
<div class="t" style="left:0px;top:375px;font-size:13px;color:#1f1fae;width:26px;text-align:center;letter-spacing:-0.3px;">25</div>
<div class="t" style="left:0px;top:392px;font-size:13px;color:#1f1fae;width:26px;text-align:center;letter-spacing:-0.3px;">39</div>
<div class="t" style="left:0px;top:409px;font-size:13px;color:#1f1fae;width:26px;text-align:center;letter-spacing:-0.3px;">40</div>
<div class="t" style="left:0px;top:426px;font-size:13px;color:#1f1fae;width:26px;text-align:center;letter-spacing:-0.3px;">41</div>
<div class="t" style="left:0px;top:443px;font-size:13px;color:#1f1fae;width:26px;text-align:center;letter-spacing:-0.3px;">43</div>
<div class="t" style="left:0px;top:460px;font-size:13px;color:#1f1fae;width:26px;text-align:center;letter-spacing:-0.3px;">49</div>
<div class="t" style="left:0px;top:477px;font-size:13px;color:#1f1fae;width:26px;text-align:center;letter-spacing:-0.3px;">50</div>
<div class="t" style="left:0px;top:494px;font-size:13px;color:#1f1fae;width:26px;text-align:center;letter-spacing:-0.3px;">52</div>
<div class="t" style="left:0px;top:511px;font-size:13px;color:#1f1fae;width:26px;text-align:center;letter-spacing:-0.3px;">53</div>
<div class="t" style="left:0px;top:528px;font-size:13px;color:#1f1fae;width:26px;text-align:center;letter-spacing:-0.3px;">57</div>
<div class="t" style="left:0px;top:545px;font-size:13px;color:#1f1fae;width:26px;text-align:center;letter-spacing:-0.3px;">58</div>
<div class="t" style="left:0px;top:562px;font-size:13px;color:#1f1fae;width:26px;text-align:center;letter-spacing:-0.3px;">59</div>
<div class="t" style="left:0px;top:579px;font-size:13px;color:#1f1fae;width:26px;text-align:center;letter-spacing:-0.3px;">60</div>
<div class="t" style="left:0px;top:596px;font-size:13px;color:#1f1fae;width:26px;text-align:center;letter-spacing:-0.3px;">68</div>
<div class="t" style="left:0px;top:613px;font-size:13px;color:#1f1fae;width:26px;text-align:center;letter-spacing:-0.3px;">69</div>
<div class="t" style="left:0px;top:630px;font-size:13px;color:#1f1fae;width:26px;text-align:center;letter-spacing:-0.3px;">70</div>
<div class="t" style="left:0px;top:647px;font-size:13px;color:#1f1fae;width:26px;text-align:center;letter-spacing:-0.3px;">72</div>
<div class="t" style="left:0px;top:664px;font-size:13px;color:#1f1fae;width:26px;text-align:center;letter-spacing:-0.3px;">75</div>
<div class="c" style="left:26px;top:237px;width:160px;height:16px;padding:4px 0 0 2px">GASOL RICARDO CRUZ A</div>
<div class="c" style="left:187px;top:237px;width:208px;height:16px;padding:4px 0 0 2px">CRUZ AGUILERA RICARDO</div>
<div class="c" style="left:396px;top:237px;width:214px;height:16px;padding:4px 0 0 2px">KM 0.5 CARR ABAS ESTAC JOAQUIN</div>
<div class="c" style="left:611px;top:237px;width:36px;height:16px;text-align:right;padding:4px 4px 0 0;letter-spacing:0px">36970</div>
<svg class="a" style="left:611px;top:237px;" width="6" height="6" viewBox="0 0 6 6"><path d="M0 0h6L0 6z" fill="#1a8a3a"/></svg>
<div class="c" style="left:648px;top:237px;width:212px;height:16px;padding:4px 0 0 2px">JUAREZ</div>
<div class="c" style="left:861px;top:237px;width:196px;height:16px;padding:4px 0 0 2px">ABASOLO GTO</div>
<div class="c" style="left:26px;top:254px;width:160px;height:16px;padding:4px 0 0 2px">GASOL CRIMER</div>
<div class="c" style="left:187px;top:254px;width:208px;height:16px;padding:4px 0 0 2px">CRIMER SA CV</div>
<div class="c" style="left:396px;top:254px;width:214px;height:16px;padding:4px 0 0 2px">CARR TOLUCA QRO KM 146</div>
<div class="c" style="left:611px;top:254px;width:36px;height:16px;text-align:right;padding:4px 4px 0 0;letter-spacing:0px">50300</div>
<svg class="a" style="left:611px;top:254px;" width="6" height="6" viewBox="0 0 6 6"><path d="M0 0h6L0 6z" fill="#1a8a3a"/></svg>
<div class="c" style="left:648px;top:254px;width:212px;height:16px;padding:4px 0 0 2px">ACAMBAY</div>
<div class="c" style="left:861px;top:254px;width:196px;height:16px;padding:4px 0 0 2px">ACAMBAY EM</div>
<div class="c" style="left:26px;top:271px;width:160px;height:16px;padding:4px 0 0 2px">CONSORCIO GASOL DARCEL</div>
<div class="c" style="left:187px;top:271px;width:208px;height:16px;padding:4px 0 0 2px">CONSORCIO GASOL DARCEL SA CV</div>
<div class="c" style="left:396px;top:271px;width:214px;height:16px;padding:4px 0 0 2px">CARR ESCENICA LTE NO 1 MZ 1</div>
<div class="c" style="left:611px;top:271px;width:36px;height:16px;text-align:right;padding:4px 4px 0 0;letter-spacing:0px">39865</div>
<svg class="a" style="left:611px;top:271px;" width="6" height="6" viewBox="0 0 6 6"><path d="M0 0h6L0 6z" fill="#1a8a3a"/></svg>
<div class="c" style="left:648px;top:271px;width:212px;height:16px;padding:4px 0 0 2px">BRISAMAR</div>
<div class="c" style="left:861px;top:271px;width:196px;height:16px;padding:4px 0 0 2px">ACAPULCO GRO</div>
<div class="c" style="left:26px;top:288px;width:160px;height:16px;padding:4px 0 0 2px">GASOL CLUB DE YATES</div>
<div class="c" style="left:187px;top:288px;width:208px;height:16px;padding:4px 0 0 2px">CLUB DE YATES ACAPULCO AC</div>
<div class="c" style="left:396px;top:288px;width:214px;height:16px;padding:4px 0 0 2px">GRAN VIA TROPICAL SN Y TAMBUCO</div>
<div class="c" style="left:611px;top:288px;width:36px;height:16px;text-align:right;padding:4px 4px 0 0;letter-spacing:0px">39390</div>
<svg class="a" style="left:611px;top:288px;" width="6" height="6" viewBox="0 0 6 6"><path d="M0 0h6L0 6z" fill="#1a8a3a"/></svg>
<div class="c" style="left:648px;top:288px;width:212px;height:16px;padding:4px 0 0 2px">FRACC LAS PLAYAS</div>
<div class="c" style="left:861px;top:288px;width:196px;height:16px;padding:4px 0 0 2px">ACAPULCO GRO</div>
<div class="c" style="left:26px;top:305px;width:160px;height:16px;padding:4px 0 0 2px">GASOL DETER</div>
<div class="c" style="left:187px;top:305px;width:208px;height:16px;padding:4px 0 0 2px">ARREDONDO VILLANUEVA HNOS SA</div>
<div class="c" style="left:396px;top:305px;width:214px;height:16px;padding:4px 0 0 2px">KM 394 CARR NAL MEX ACAPULCO</div>
<div class="c" style="left:611px;top:305px;width:36px;height:16px;text-align:right;padding:4px 4px 0 0;letter-spacing:0px">39770</div>
<svg class="a" style="left:611px;top:305px;" width="6" height="6" viewBox="0 0 6 6"><path d="M0 0h6L0 6z" fill="#1a8a3a"/></svg>
<div class="c" style="left:648px;top:305px;width:212px;height:16px;padding:4px 0 0 2px">LAS CRUCES</div>
<div class="c" style="left:861px;top:305px;width:196px;height:16px;padding:4px 0 0 2px">ACAPULCO GRO</div>
<div class="c" style="left:26px;top:322px;width:160px;height:16px;padding:4px 0 0 2px">GASOL LOS ORGANOS</div>
<div class="c" style="left:187px;top:322px;width:208px;height:16px;padding:4px 0 0 2px">GASOL LOS ORGANOS SA CV</div>
<div class="c" style="left:396px;top:322px;width:214px;height:16px;padding:4px 0 0 2px">CARR NAL ACAPULCO  MEX KM 15</div>
<div class="c" style="left:611px;top:322px;width:36px;height:16px;text-align:right;padding:4px 4px 0 0;letter-spacing:0px">39909</div>
<svg class="a" style="left:611px;top:322px;" width="6" height="6" viewBox="0 0 6 6"><path d="M0 0h6L0 6z" fill="#1a8a3a"/></svg>
<div class="c" style="left:648px;top:322px;width:212px;height:16px;padding:4px 0 0 2px">LOS ORGANOS</div>
<div class="c" style="left:861px;top:322px;width:196px;height:16px;padding:4px 0 0 2px">ACAPULCO GRO</div>
<div class="c" style="left:26px;top:339px;width:160px;height:16px;padding:4px 0 0 2px">GASOL MAGALLANES</div>
<div class="c" style="left:187px;top:339px;width:208px;height:16px;padding:4px 0 0 2px">SERV MAGALLANES SA CV</div>
<div class="c" style="left:396px;top:339px;width:214px;height:16px;padding:4px 0 0 2px">AV WILFRIDO MASSIEU NO 8 304</div>
<div class="c" style="left:611px;top:339px;width:36px;height:16px;text-align:right;padding:4px 4px 0 0;letter-spacing:0px">39670</div>
<svg class="a" style="left:611px;top:339px;" width="6" height="6" viewBox="0 0 6 6"><path d="M0 0h6L0 6z" fill="#1a8a3a"/></svg>
<div class="c" style="left:648px;top:339px;width:212px;height:16px;padding:4px 0 0 2px">FRACC MAGALLANES</div>
<div class="c" style="left:861px;top:339px;width:196px;height:16px;padding:4px 0 0 2px">ACAPULCO GRO</div>
<div class="c" style="left:26px;top:356px;width:160px;height:16px;padding:4px 0 0 2px">GASOL MODELO</div>
<div class="c" style="left:187px;top:356px;width:208px;height:16px;padding:4px 0 0 2px">ALCARAZ SOBERANIS SA CV</div>
<div class="c" style="left:396px;top:356px;width:214px;height:16px;padding:4px 0 0 2px">AQUILES SERDAN Y CJON LIMA SN</div>
<div class="c" style="left:611px;top:356px;width:36px;height:16px;text-align:right;padding:4px 4px 0 0;letter-spacing:0px">39300</div>
<svg class="a" style="left:611px;top:356px;" width="6" height="6" viewBox="0 0 6 6"><path d="M0 0h6L0 6z" fill="#1a8a3a"/></svg>
<div class="c" style="left:648px;top:356px;width:212px;height:16px;padding:4px 0 0 2px">CENTRO</div>
<div class="c" style="left:861px;top:356px;width:196px;height:16px;padding:4px 0 0 2px">ACAPULCO GRO</div>
<div class="c" style="left:26px;top:373px;width:160px;height:16px;padding:4px 0 0 2px">GASOL SERVI FER</div>
<div class="c" style="left:187px;top:373px;width:208px;height:16px;padding:4px 0 0 2px">SERVI FER SA CV</div>
<div class="c" style="left:396px;top:373px;width:214px;height:16px;padding:4px 0 0 2px">AV LAZARO CARDENAS NO 1</div>
<div class="c" style="left:611px;top:373px;width:36px;height:16px;text-align:right;padding:4px 4px 0 0;letter-spacing:0px">39800</div>
<svg class="a" style="left:611px;top:373px;" width="6" height="6" viewBox="0 0 6 6"><path d="M0 0h6L0 6z" fill="#1a8a3a"/></svg>
<div class="c" style="left:648px;top:373px;width:212px;height:16px;padding:4px 0 0 2px">LA MAQUINA</div>
<div class="c" style="left:861px;top:373px;width:196px;height:16px;padding:4px 0 0 2px">ACAPULCO GRO</div>
<div class="c" style="left:26px;top:390px;width:160px;height:16px;padding:4px 0 0 2px">GASOL ESTACION 0677</div>
<div class="c" style="left:187px;top:390px;width:208px;height:16px;padding:4px 0 0 2px">SERVS EMPR Y ADMIVOS HGO SA CV</div>
<div class="c" style="left:396px;top:390px;width:214px;height:16px;padding:4px 0 0 2px">CARR MEXICO LAREDO KM 118</div>
<div class="c" style="left:611px;top:390px;width:36px;height:16px;text-align:right;padding:4px 4px 0 0;letter-spacing:0px">42500</div>
<svg class="a" style="left:611px;top:390px;" width="6" height="6" viewBox="0 0 6 6"><path d="M0 0h6L0 6z" fill="#1a8a3a"/></svg>
<div class="c" style="left:648px;top:390px;width:212px;height:16px;padding:4px 0 0 2px">CENTRO</div>
<div class="c" style="left:861px;top:390px;width:196px;height:16px;padding:4px 0 0 2px">ACTOPAN HGO</div>
<div class="c" style="left:26px;top:407px;width:160px;height:16px;padding:4px 0 0 2px">GASOL ESTACION 5654</div>
<div class="c" style="left:187px;top:407px;width:208px;height:16px;padding:4px 0 0 2px">GRUPO GASOLINERO DE HGO SA CV</div>
<div class="c" style="left:396px;top:407px;width:214px;height:16px;padding:4px 0 0 2px">CARR MEXICO LAREDO KM 121.7</div>
<div class="c" style="left:611px;top:407px;width:36px;height:16px;text-align:right;padding:4px 4px 0 0;letter-spacing:0px">42500</div>
<svg class="a" style="left:611px;top:407px;" width="6" height="6" viewBox="0 0 6 6"><path d="M0 0h6L0 6z" fill="#1a8a3a"/></svg>
<div class="c" style="left:648px;top:407px;width:212px;height:16px;padding:4px 0 0 2px">CENTRO</div>
<div class="c" style="left:861px;top:407px;width:196px;height:16px;padding:4px 0 0 2px">ACTOPAN HGO</div>
<div class="c" style="left:26px;top:424px;width:160px;height:16px;padding:4px 0 0 2px">GASOLUB JIADHI DEB</div>
<div class="c" style="left:187px;top:424px;width:208px;height:16px;padding:4px 0 0 2px">GASOLUB SA CV</div>
<div class="c" style="left:396px;top:424px;width:214px;height:16px;padding:4px 0 0 2px">CARR MEXICO LAREDO KM 115</div>
<div class="c" style="left:611px;top:424px;width:36px;height:16px;text-align:right;padding:4px 4px 0 0;letter-spacing:0px">42500</div>
<svg class="a" style="left:611px;top:424px;" width="6" height="6" viewBox="0 0 6 6"><path d="M0 0h6L0 6z" fill="#1a8a3a"/></svg>
<div class="c" style="left:648px;top:424px;width:212px;height:16px;padding:4px 0 0 2px">EL JIADI ACTOPAN</div>
<div class="c" style="left:861px;top:424px;width:196px;height:16px;padding:4px 0 0 2px">ACTOPAN HGO</div>
<div class="c" style="left:26px;top:441px;width:160px;height:16px;padding:4px 0 0 2px">SERV GASOLINERO DAMG</div>
<div class="c" style="left:187px;top:441px;width:208px;height:16px;padding:4px 0 0 2px">DAMG SA CV</div>
<div class="c" style="left:396px;top:441px;width:214px;height:16px;padding:4px 0 0 2px">PRL EFREN REBOLLEDO NO 344</div>
<div class="c" style="left:611px;top:441px;width:36px;height:16px;text-align:right;padding:4px 4px 0 0;letter-spacing:0px">42500</div>
<svg class="a" style="left:611px;top:441px;" width="6" height="6" viewBox="0 0 6 6"><path d="M0 0h6L0 6z" fill="#1a8a3a"/></svg>
<div class="c" style="left:648px;top:441px;width:212px;height:16px;padding:4px 0 0 2px">CENTRO</div>
<div class="c" style="left:861px;top:441px;width:196px;height:16px;padding:4px 0 0 2px">ACTOPAN HGO</div>
<div class="c" style="left:26px;top:458px;width:160px;height:16px;padding:4px 0 0 2px">GASOL NORBAR</div>
<div class="c" style="left:187px;top:458px;width:208px;height:16px;padding:4px 0 0 2px">GASOL NORBAR SA CV</div>
<div class="c" style="left:396px;top:458px;width:214px;height:16px;padding:4px 0 0 2px">C 22 NO 3215 Y AV 32</div>
<div class="c" style="left:611px;top:458px;width:36px;height:16px;text-align:right;padding:4px 4px 0 0;letter-spacing:0px">84200</div>
<svg class="a" style="left:611px;top:458px;" width="6" height="6" viewBox="0 0 6 6"><path d="M0 0h6L0 6z" fill="#1a8a3a"/></svg>
<div class="c" style="left:648px;top:458px;width:212px;height:16px;padding:4px 0 0 2px">CENTRO</div>
<div class="c" style="left:861px;top:458px;width:196px;height:16px;padding:4px 0 0 2px">AGUA PRIETA SON</div>
<div class="c" style="left:26px;top:475px;width:160px;height:16px;padding:4px 0 0 2px">GASOLS D NOROESTE</div>
<div class="c" style="left:187px;top:475px;width:208px;height:16px;padding:4px 0 0 2px">GASOLINERAS D NOROESTE SA CV</div>
<div class="c" style="left:396px;top:475px;width:214px;height:16px;padding:4px 0 0 2px">C 6 AV 33 NO 3295</div>
<div class="c" style="left:611px;top:475px;width:36px;height:16px;text-align:right;padding:4px 4px 0 0;letter-spacing:0px">84200</div>
<svg class="a" style="left:611px;top:475px;" width="6" height="6" viewBox="0 0 6 6"><path d="M0 0h6L0 6z" fill="#1a8a3a"/></svg>
<div class="c" style="left:648px;top:475px;width:212px;height:16px;padding:4px 0 0 2px">CENTRO</div>
<div class="c" style="left:861px;top:475px;width:196px;height:16px;padding:4px 0 0 2px">AGUA PRIETA SON</div>
<div class="c" style="left:26px;top:492px;width:160px;height:16px;padding:4px 0 0 2px">GASOL ASTRA DEB</div>
<div class="c" style="left:187px;top:492px;width:208px;height:16px;padding:4px 0 0 2px">GASOLINERA ASTRA SA CV</div>
<div class="c" style="left:396px;top:492px;width:214px;height:16px;padding:4px 0 0 2px">AV DE LA CONVENCION SUR NO 600</div>
<div class="c" style="left:611px;top:492px;width:36px;height:16px;text-align:right;padding:4px 4px 0 0;letter-spacing:0px">20230</div>
<svg class="a" style="left:611px;top:492px;" width="6" height="6" viewBox="0 0 6 6"><path d="M0 0h6L0 6z" fill="#1a8a3a"/></svg>
<div class="c" style="left:648px;top:492px;width:212px;height:16px;padding:4px 0 0 2px">FRACC LAS AMERICAS</div>
<div class="c" style="left:861px;top:492px;width:196px;height:16px;padding:4px 0 0 2px">AGUASCALIENTES AGS</div>
<div class="c" style="left:26px;top:509px;width:160px;height:16px;padding:4px 0 0 2px">GASOL LA FERIA</div>
<div class="c" style="left:187px;top:509px;width:208px;height:16px;padding:4px 0 0 2px">SERV DE ALBA O SA CV</div>
<div class="c" style="left:396px;top:509px;width:214px;height:16px;padding:4px 0 0 2px">AV CONVENCION DE 1914 NO 410</div>
<div class="c" style="left:611px;top:509px;width:36px;height:16px;text-align:right;padding:4px 4px 0 0;letter-spacing:0px">20210</div>
<svg class="a" style="left:611px;top:509px;" width="6" height="6" viewBox="0 0 6 6"><path d="M0 0h6L0 6z" fill="#1a8a3a"/></svg>
<div class="c" style="left:648px;top:509px;width:212px;height:16px;padding:4px 0 0 2px">CIRCUNVALACION PONIENTE</div>
<div class="c" style="left:861px;top:509px;width:196px;height:16px;padding:4px 0 0 2px">AGUASCALIENTES AGS</div>
<div class="c" style="left:26px;top:526px;width:160px;height:16px;padding:4px 0 0 2px">SERV GASOLINEROS D MEX</div>
<div class="c" style="left:187px;top:526px;width:208px;height:16px;padding:4px 0 0 2px">SERV GASOLINEROS MEX SACV</div>
<div class="c" style="left:396px;top:526px;width:214px;height:16px;padding:4px 0 0 2px">AV AGUASCALIENTES SUR NO 3402</div>
<div class="c" style="left:611px;top:526px;width:36px;height:16px;text-align:right;padding:4px 4px 0 0;letter-spacing:0px">20289</div>
<svg class="a" style="left:611px;top:526px;" width="6" height="6" viewBox="0 0 6 6"><path d="M0 0h6L0 6z" fill="#1a8a3a"/></svg>
<div class="c" style="left:648px;top:526px;width:212px;height:16px;padding:4px 0 0 2px">PRADOS DEL SUR</div>
<div class="c" style="left:861px;top:526px;width:196px;height:16px;padding:4px 0 0 2px">AGUASCALIENTES AGS</div>
<div class="c" style="left:26px;top:543px;width:160px;height:16px;padding:4px 0 0 2px">SERV GASOLINEROS D MEX</div>
<div class="c" style="left:187px;top:543px;width:208px;height:16px;padding:4px 0 0 2px">SERV GASOLINEROS MEX SACV</div>
<div class="c" style="left:396px;top:543px;width:214px;height:16px;padding:4px 0 0 2px">AV AGUASCALIENTES NTE NO 724</div>
<div class="c" style="left:611px;top:543px;width:36px;height:16px;text-align:right;padding:4px 4px 0 0;letter-spacing:0px">20130</div>
<svg class="a" style="left:611px;top:543px;" width="6" height="6" viewBox="0 0 6 6"><path d="M0 0h6L0 6z" fill="#1a8a3a"/></svg>
<div class="c" style="left:648px;top:543px;width:212px;height:16px;padding:4px 0 0 2px">CENTRO</div>
<div class="c" style="left:861px;top:543px;width:196px;height:16px;padding:4px 0 0 2px">AGUASCALIENTES AGS</div>
<div class="c" style="left:26px;top:560px;width:160px;height:16px;padding:4px 0 0 2px">SERV GASOLINEROS D MEX</div>
<div class="c" style="left:187px;top:560px;width:208px;height:16px;padding:4px 0 0 2px">SERV GASOLINEROS MEX S</div>
<div class="c" style="left:396px;top:560px;width:214px;height:16px;padding:4px 0 0 2px">DOM CONOCIDO</div>
<div class="c" style="left:611px;top:560px;width:36px;height:16px;text-align:right;padding:4px 4px 0 0;letter-spacing:0px">20040</div>
<svg class="a" style="left:611px;top:560px;" width="6" height="6" viewBox="0 0 6 6"><path d="M0 0h6L0 6z" fill="#1a8a3a"/></svg>
<div class="c" style="left:648px;top:560px;width:212px;height:16px;padding:4px 0 0 2px">CURTIDORES</div>
<div class="c" style="left:861px;top:560px;width:196px;height:16px;padding:4px 0 0 2px">AGUASCALIENTES AGS</div>
<div class="c" style="left:26px;top:577px;width:160px;height:16px;padding:4px 0 0 2px">SERV GASOLINEROS D MEX</div>
<div class="c" style="left:187px;top:577px;width:208px;height:16px;padding:4px 0 0 2px">SERV GASOLINEROS MEX SACV</div>
<div class="c" style="left:396px;top:577px;width:214px;height:16px;padding:4px 0 0 2px">AV DE LA COMUNICACION NTE 406</div>
<div class="c" style="left:611px;top:577px;width:36px;height:16px;text-align:right;padding:4px 4px 0 0;letter-spacing:0px">20030</div>
<svg class="a" style="left:611px;top:577px;" width="6" height="6" viewBox="0 0 6 6"><path d="M0 0h6L0 6z" fill="#1a8a3a"/></svg>
<div class="c" style="left:648px;top:577px;width:212px;height:16px;padding:4px 0 0 2px">GREMIAL FERROCARRILERA</div>
<div class="c" style="left:861px;top:577px;width:196px;height:16px;padding:4px 0 0 2px">AGUASCALIENTES AGS</div>
<div class="c" style="left:26px;top:594px;width:160px;height:16px;padding:4px 0 0 2px">GASOL EL CARRIZO MATRI</div>
<div class="c" style="left:187px;top:594px;width:208px;height:16px;padding:4px 0 0 2px">GASOL EL CARRIZO SA CV</div>
<div class="c" style="left:396px;top:594px;width:214px;height:16px;padding:4px 0 0 2px">C 4A Y 4A MZ NO 74</div>
<div class="c" style="left:611px;top:594px;width:36px;height:16px;text-align:right;padding:4px 4px 0 0;letter-spacing:0px">81320</div>
<svg class="a" style="left:611px;top:594px;" width="6" height="6" viewBox="0 0 6 6"><path d="M0 0h6L0 6z" fill="#1a8a3a"/></svg>
<div class="c" style="left:648px;top:594px;width:212px;height:16px;padding:4px 0 0 2px">DIAZ ORDAZ GUSTAVO VILLA</div>
<div class="c" style="left:861px;top:594px;width:196px;height:16px;padding:4px 0 0 2px">AHOME SIN</div>
<div class="c" style="left:26px;top:611px;width:160px;height:16px;padding:4px 0 0 2px">GASOL EL CARRIZO SUCL</div>
<div class="c" style="left:187px;top:611px;width:208px;height:16px;padding:4px 0 0 2px">GASOL EL CARRIZO SA CV</div>
<div class="c" style="left:396px;top:611px;width:214px;height:16px;padding:4px 0 0 2px">BLVD J ORTIZ DGUEZ SN</div>
<div class="c" style="left:611px;top:611px;width:36px;height:16px;text-align:right;padding:4px 4px 0 0;letter-spacing:0px">81320</div>
<svg class="a" style="left:611px;top:611px;" width="6" height="6" viewBox="0 0 6 6"><path d="M0 0h6L0 6z" fill="#1a8a3a"/></svg>
<div class="c" style="left:648px;top:611px;width:212px;height:16px;padding:4px 0 0 2px">DIAZ ORDAZ GUSTAVO VILLA</div>
<div class="c" style="left:861px;top:611px;width:196px;height:16px;padding:4px 0 0 2px">AHOME SIN</div>
<div class="c" style="left:26px;top:628px;width:160px;height:16px;padding:4px 0 0 2px">GASOL TOPOLOBAMPO</div>
<div class="c" style="left:187px;top:628px;width:208px;height:16px;padding:4px 0 0 2px">GASOL TOPOLOBAMPO SA CV</div>
<div class="c" style="left:396px;top:628px;width:214px;height:16px;padding:4px 0 0 2px">EJE 4 ESQ EJE 5 SN</div>
<div class="c" style="left:611px;top:628px;width:36px;height:16px;text-align:right;padding:4px 4px 0 0;letter-spacing:0px">81370</div>
<svg class="a" style="left:611px;top:628px;" width="6" height="6" viewBox="0 0 6 6"><path d="M0 0h6L0 6z" fill="#1a8a3a"/></svg>
<div class="c" style="left:648px;top:628px;width:212px;height:16px;padding:4px 0 0 2px">PQUE IND PESQUERO</div>
<div class="c" style="left:861px;top:628px;width:196px;height:16px;padding:4px 0 0 2px">AHOME SIN</div>
<div class="c" style="left:26px;top:645px;width:160px;height:16px;padding:4px 0 0 2px">GASOL VILLA AHUMADA</div>
<div class="c" style="left:187px;top:645px;width:208px;height:16px;padding:4px 0 0 2px">GASOL VILLA AHUMADA SA CV</div>
<div class="c" style="left:396px;top:645px;width:214px;height:16px;padding:4px 0 0 2px">CARR PANAMAERICANA NO 1905</div>
<div class="c" style="left:611px;top:645px;width:36px;height:16px;text-align:right;padding:4px 4px 0 0;letter-spacing:0px">32800</div>
<svg class="a" style="left:611px;top:645px;" width="6" height="6" viewBox="0 0 6 6"><path d="M0 0h6L0 6z" fill="#1a8a3a"/></svg>
<div class="c" style="left:648px;top:645px;width:212px;height:16px;padding:4px 0 0 2px">AHUMADA VILLA</div>
<div class="c" style="left:861px;top:645px;width:196px;height:16px;padding:4px 0 0 2px">AHUMADA CHIH</div>
<div class="c" style="left:26px;top:662px;width:160px;height:16px;padding:4px 0 0 2px">GASOL LA PALMA</div>
<div class="c" style="left:187px;top:662px;width:208px;height:16px;padding:4px 0 0 2px">PAREDES DE LEIJA BEATRIZ</div>
<div class="c" style="left:396px;top:662px;width:214px;height:16px;padding:4px 0 0 2px">CARR MANUEL SOTA LA MA KM 35 5</div>
<div class="c" style="left:611px;top:662px;width:36px;height:16px;text-align:right;padding:4px 4px 0 0;letter-spacing:0px">89671</div>
<svg class="a" style="left:611px;top:662px;" width="6" height="6" viewBox="0 0 6 6"><path d="M0 0h6L0 6z" fill="#1a8a3a"/></svg>
<div class="c" style="left:648px;top:662px;width:212px;height:16px;padding:4px 0 0 2px">ADMON DE CORREOS VILLA ALDAMA</div>
<div class="c" style="left:861px;top:662px;width:196px;height:16px;padding:4px 0 0 2px">ALDAMA TAMPS</div>
<div class="a" style="left:26px;top:220px;width:1031px;height:16px;background:#c6c6c6;"></div>
<div class="a" style="left:26px;top:236px;width:1032px;height:1px;background:#000;"></div>
<div class="c" style="left:26px;top:220px;width:160px;height:16px;text-align:center;padding-top:4px;color:#1a1a1a;letter-spacing:-0.9px">NOMBRE</div>
<div class="a" style="left:186px;top:220px;width:1px;height:17px;background:#000;"></div>
<div class="a" style="left:170px;top:220px;width:16px;height:16px;background:#f7f8fa;"></div>
<svg class="a" style="left:170px;top:220px;" width="16" height="16" viewBox="0 0 16 16"><path d="M6 3.5h8l-3 3.5v5h-2V7z" fill="#555"/><path d="M2.5 9.5h4l-2 2.2z" fill="#555"/></svg>
<div class="c" style="left:187px;top:220px;width:208px;height:16px;text-align:center;padding-top:4px;color:#1a1a1a;letter-spacing:-0.9px">RAZON SOCIAL</div>
<div class="a" style="left:395px;top:220px;width:1px;height:17px;background:#000;"></div>
<div class="a" style="left:379px;top:220px;width:16px;height:16px;background:#f7f8fa;"></div>
<svg class="a" style="left:379px;top:220px;" width="16" height="16" viewBox="0 0 16 16"><path d="M4 6.5h7l-3.5 4z" fill="#666"/></svg>
<div class="c" style="left:396px;top:220px;width:214px;height:16px;text-align:center;padding-top:4px;color:#1a1a1a;letter-spacing:-0.9px">DOMICILIO</div>
<div class="a" style="left:610px;top:220px;width:1px;height:17px;background:#000;"></div>
<div class="a" style="left:594px;top:220px;width:16px;height:16px;background:#f7f8fa;"></div>
<svg class="a" style="left:594px;top:220px;" width="16" height="16" viewBox="0 0 16 16"><path d="M4 6.5h7l-3.5 4z" fill="#666"/></svg>
<div class="c" style="left:622px;top:220px;width:9px;height:16px;padding-top:4px;color:#1a1a1a;letter-spacing:0">C</div>
<div class="a" style="left:647px;top:220px;width:1px;height:17px;background:#000;"></div>
<div class="a" style="left:631px;top:220px;width:16px;height:16px;background:#f7f8fa;"></div>
<svg class="a" style="left:631px;top:220px;" width="16" height="16" viewBox="0 0 16 16"><path d="M4 6.5h7l-3.5 4z" fill="#666"/></svg>
<div class="c" style="left:648px;top:220px;width:212px;height:16px;text-align:center;padding-top:4px;color:#1a1a1a;letter-spacing:-0.9px">COLONIA</div>
<div class="a" style="left:860px;top:220px;width:1px;height:17px;background:#000;"></div>
<div class="a" style="left:844px;top:220px;width:16px;height:16px;background:#f7f8fa;"></div>
<svg class="a" style="left:844px;top:220px;" width="16" height="16" viewBox="0 0 16 16"><path d="M4 6.5h7l-3.5 4z" fill="#666"/></svg>
<div class="c" style="left:861px;top:220px;width:196px;height:16px;text-align:center;padding-top:4px;color:#1a1a1a;letter-spacing:-0.9px">POBLACION</div>
<div class="a" style="left:1057px;top:220px;width:1px;height:17px;background:#000;"></div>
<div class="a" style="left:1041px;top:220px;width:16px;height:16px;background:#f7f8fa;"></div>
<svg class="a" style="left:1041px;top:220px;" width="16" height="16" viewBox="0 0 16 16"><path d="M4 6.5h7l-3.5 4z" fill="#666"/></svg>
<div class="a" style="left:1056px;top:253px;width:148px;height:2px;background:#217346;"></div>
<div class="a" style="left:1345px;top:203px;width:21px;height:476px;background:#e6e6e6;"></div>
<div class="a" style="left:1348px;top:205px;width:15px;height:15px;background:#fff;border:1px solid #b4b4b4"></div>
<svg class="a" style="left:1351px;top:209px;" width="9" height="5" viewBox="0 0 9 5"><path d="M0.5 4.5h8L4.5 0.5z" fill="#666"/></svg>
<div class="a" style="left:1348px;top:221px;width:15px;height:16px;background:#fff;border:1px solid #b4b4b4"></div>
<div class="a" style="left:1349px;top:237px;width:13px;height:427px;background:#dadada;"></div>
<div class="a" style="left:1348px;top:664px;width:15px;height:15px;background:#fff;border:1px solid #b4b4b4"></div>
<svg class="a" style="left:1351px;top:669px;" width="9" height="5" viewBox="0 0 9 5"><path d="M0.5 0.5h8L4.5 4.5z" fill="#666"/></svg>
<div class="a" style="left:0px;top:679px;width:1366px;height:27px;background:#e6e6e6;"></div>
<div class="a" style="left:0px;top:706px;width:1366px;height:1px;background:#d0d0d0;"></div>
<svg class="a" style="left:27px;top:688px;" width="5" height="8" viewBox="0 0 5 8"><path d="M4.5 0.5v7L0.5 4z" fill="#c0c0c0"/></svg>
<svg class="a" style="left:55px;top:688px;" width="5" height="8" viewBox="0 0 5 8"><path d="M0.5 0.5v7L4.5 4z" fill="#c0c0c0"/></svg>
<div class="a" style="left:100px;top:678px;width:66px;height:25px;background:#fff;border-left:1px solid #a8a8a8;border-right:1px solid #a8a8a8"></div>
<div class="a" style="left:100px;top:701px;width:66px;height:2px;background:#217346;"></div>
<div class="t" style="left:112.3px;top:685px;font-size:13px;color:#217346;font-weight:bold;letter-spacing:0.133px;">detalle</div>
<svg class="a" style="left:198px;top:683px;" width="18" height="18" viewBox="0 0 18 18"><circle cx="9" cy="9" r="8" fill="none" stroke="#777" stroke-width="1.2"/><path d="M9 4.5v9M4.5 9h9" stroke="#777" stroke-width="1.6"/></svg>
<div class="a" style="left:819px;top:687px;width:2px;height:2px;background:#a8a8a8;"></div>
<div class="a" style="left:819px;top:691px;width:2px;height:2px;background:#a8a8a8;"></div>
<div class="a" style="left:819px;top:695px;width:2px;height:2px;background:#a8a8a8;"></div>
<div class="a" style="left:836px;top:685px;width:15px;height:15px;background:#fff;border:1px solid #ababab"></div>
<svg class="a" style="left:840px;top:688px;" width="5" height="9" viewBox="0 0 5 9"><path d="M4.5 0.5v8L0.5 4.5z" fill="#666"/></svg>
<div class="a" style="left:850px;top:685px;width:420px;height:15px;background:#fff;border:1px solid #ababab"></div>
<div class="a" style="left:1270px;top:686px;width:60px;height:13px;background:#dadada;"></div>
<div class="a" style="left:1332px;top:685px;width:15px;height:15px;background:#fff;border:1px solid #ababab"></div>
<svg class="a" style="left:1337px;top:688px;" width="5" height="9" viewBox="0 0 5 9"><path d="M0.5 0.5v8L4.5 4.5z" fill="#666"/></svg>
<div class="a" style="left:0px;top:707px;width:1366px;height:21px;background:#f3f3f3;"></div>
<div class="t" style="left:6.7px;top:712px;font-size:11.5px;color:#222;;letter-spacing:-0.100px;">Listo</div>
<div class="t" style="left:47.5px;top:712px;font-size:11.5px;color:#222;;letter-spacing:-0.091px;">Se encontraron 608 de 2908 registros</div>
<svg class="a" style="left:257px;top:710px;" width="15" height="13" viewBox="0 0 15 13"><circle cx="3.5" cy="3.5" r="3" fill="#555"/><rect x="7.5" y="2.5" width="6" height="3" fill="#777"/><rect x="1.5" y="6.5" width="12" height="6" fill="#fff" stroke="#666"/><path d="M4 8.5h1M7 8.5h1M10 8.5h1M4 10.5h1M7 10.5h1M10 10.5h1" stroke="#555"/></svg>
<div class="a" style="left:1081px;top:707px;width:37px;height:21px;background:#d4d4d4;"></div>
<svg class="a" style="left:1092px;top:710px;" width="14" height="13" viewBox="0 0 14 13"><rect x="0.5" y="0.5" width="13" height="12" fill="none" stroke="#666"/><path d="M0.5 4.5h13M0.5 8.5h13M4.5 0.5v12M9.5 0.5v12" stroke="#666"/></svg>
<svg class="a" style="left:1130px;top:710px;" width="15" height="13" viewBox="0 0 15 13"><rect x="0.5" y="0.5" width="14" height="12" fill="none" stroke="#666"/><rect x="3.5" y="2.5" width="8" height="8" fill="none" stroke="#666"/><path d="M5 5h5M5 7h5M5 9h5" stroke="#666"/></svg>
<svg class="a" style="left:1168px;top:710px;" width="14" height="13" viewBox="0 0 14 13"><rect x="0.5" y="0.5" width="13" height="12" fill="none" stroke="#666"/><path d="M0.5 7.5h8V0.5M4.5 0.5v7" fill="none" stroke="#666"/></svg>
<div class="a" style="left:1199px;top:716px;width:7px;height:2px;background:#666;"></div>
<div class="a" style="left:1209px;top:717px;width:100px;height:1px;background:#a0a0a0;"></div>
<div class="a" style="left:1257px;top:711px;width:5px;height:11px;background:#777;"></div>
<div class="a" style="left:1312px;top:716px;width:8px;height:2px;background:#666;"></div>
<div class="a" style="left:1315px;top:713px;width:2px;height:8px;background:#666;"></div>
<div class="t" style="left:1330.4px;top:711px;font-size:11.5px;color:#333;;letter-spacing:-0.633px;">100%</div>
<div class="a" style="left:0;top:728px;width:1366px;height:40px;background:linear-gradient(90deg,#213744 0%,#20313f 45%,#1b2843 100%)"></div>
<svg class="a" style="left:15px;top:739px;" width="18" height="18" viewBox="0 0 18 18"><path d="M1 3l6.3-.9V8.3H1zM8.7 1.9L17 .8V8.3H8.7zM1 9.7h6.3v6.2L1 15zM8.7 9.7H17v7.5L8.7 16.1z" fill="#fff"/></svg>
<div class="a" style="left:48px;top:728px;width:344px;height:40px;background:#f0f0f0;border-top:1px solid #c8c8c8;border-bottom:1px solid #b8b8b8"></div>
<svg class="a" style="left:59px;top:740px;" width="17" height="17" viewBox="0 0 17 17"><circle cx="10.5" cy="6.5" r="5" fill="none" stroke="#222" stroke-width="1.3"/><path d="M7 10L1 16" stroke="#222" stroke-width="1.4"/></svg>
<div class="t" style="left:87.5px;top:742px;font-size:14px;color:#3a3a3a;;letter-spacing:0.230px;">Escribe aquí para buscar</div>
<svg class="a" style="left:310px;top:728px;" width="82" height="40" viewBox="0 0 82 40"><path d="M20 40L57 16l12 4 13 20z" fill="#dccb98"/><path d="M60 17q8 2 12 10l8 13h-6z" fill="#c9b27a"/><path d="M31 36q8-4 14-10M38 40q8-5 16-12M56 40q4-3 8-6M50 22q4-1 7-2" stroke="#5a4aa8" stroke-width="1.6" fill="none"/><path d="M36 25q14 2 35-2" stroke="#3f8f45" stroke-width="2.4" fill="none" stroke-linecap="round"/><path d="M29 3q10 3 9 19q-9-6-9-19z" fill="#3f9a4a"/><path d="M16 34q6-5 14-3q-6 5-14 3z" fill="#3f9a4a"/><ellipse cx="23" cy="17" rx="13.5" ry="13" fill="#ec4a38"/><ellipse cx="20" cy="13" rx="7" ry="6" fill="#f47f6a"/><path d="M16 13q4-5 8 0q-3 4-8 0z" fill="#d8382a"/><path d="M14 22q8 6 18-2" stroke="#c83020" stroke-width="1.5" fill="none"/></svg>
<svg class="a" style="left:407px;top:739px;" width="18" height="18" viewBox="0 0 18 18"><rect x="2.5" y="4.5" width="10" height="9" fill="none" stroke="#fff" stroke-width="1.2"/><path d="M1 2h12M1 16h12M15.5 1.5v3M15.5 7v10" stroke="#fff" stroke-width="1.3"/><rect x="14.5" y="4.5" width="2.5" height="2.5" fill="#fff"/></svg>
<svg class="a" style="left:455px;top:736px;" width="25" height="25" viewBox="0 0 25 25"><defs><linearGradient id="eg1" x1="0" y1="0" x2="1" y2="0"><stop offset="0" stop-color="#2ea8e6"/><stop offset="1" stop-color="#5fd46a"/></linearGradient><linearGradient id="eg2" x1="0" y1="0" x2="0" y2="1"><stop offset="0" stop-color="#2b9be0"/><stop offset="1" stop-color="#0d5fae"/></linearGradient></defs><circle cx="12.5" cy="12.5" r="12" fill="url(#eg2)"/><path d="M1 11A12 12 0 0 1 24.5 12.5Q24.5 17.5 18.5 17.5Q13.5 17.5 14 13.5Q14 9.5 9 9.5Q4 9.5 1 11z" fill="url(#eg1)"/><path d="M1.5 14Q3 23 12.5 24.5Q7.5 21 8 16.5Q8.5 12.5 12 12.5Q8 11 5 12.5Q2.5 13.5 1.5 14z" fill="#0c4f98"/></svg>
<svg class="a" style="left:503px;top:737px;" width="25" height="22" viewBox="0 0 25 22"><path d="M1 2h8l2 2h13v16H1z" fill="#e8b838"/><path d="M1 6h23v14H1z" fill="#f8d775"/><rect x="7" y="13" width="11" height="8" fill="#3b8fd8"/><rect x="10" y="16" width="5" height="5" fill="#f8d775"/></svg>
<div class="a" style="left:496px;top:766px;width:40px;height:2px;background:#76b9ed;"></div>
<svg class="a" style="left:552px;top:735px;" width="25" height="26" viewBox="0 0 25 26"><path d="M7 7V4a5.5 3 0 0 1 11 0v3" fill="none" stroke="#3aa0e8" stroke-width="1.6"/><rect x="1.5" y="7" width="22" height="17" rx="3" fill="#f4f4f4"/><rect x="8" y="11" width="4" height="4" fill="#f25022"/><rect x="13" y="11" width="4" height="4" fill="#7fba00"/><rect x="8" y="16" width="4" height="4" fill="#00a4ef"/><rect x="13" y="16" width="4" height="4" fill="#ffb900"/></svg>
<svg class="a" style="left:601px;top:737px;" width="26" height="22" viewBox="0 0 26 22"><rect x="1" y="6" width="24" height="15" fill="#1e8be0"/><path d="M1 6l12 9 12-9z" fill="#fff"/><path d="M1 6L13 0l12 6" fill="#0c6ec4"/></svg>
<svg class="a" style="left:650px;top:736px;" width="25" height="25" viewBox="0 0 25 25"><path d="M12.5 12.5L2.11 6.50A12 12 0 0 1 22.89 6.50z" fill="#db4437"/><path d="M12.5 12.5L22.89 6.50A12 12 0 0 1 12.50 24.50z" fill="#f4c20d"/><path d="M12.5 12.5L12.50 24.50A12 12 0 0 1 2.11 6.50z" fill="#0f9d58"/><circle cx="12.5" cy="12.5" r="5.64" fill="#fff"/><circle cx="12.5" cy="12.5" r="4.44" fill="#4285f4"/></svg>
<div class="a" style="left:643px;top:766px;width:40px;height:2px;background:#76b9ed;"></div>
<div class="a" style="left:688px;top:728px;width:48px;height:40px;background:#4f5a63;"></div>
<svg class="a" style="left:700px;top:737px;" width="24" height="22" viewBox="0 0 24 22"><rect x="1" y="1" width="22" height="20" rx="1.5" fill="#1d6f42"/><path d="M14.5 2.5h6.5v17h-6.5z" fill="none" stroke="#fff" stroke-width="1"/><path d="M15 6.5h6M15 10.5h6M15 14.5h6M17.5 3v16" stroke="#e8f3ec" stroke-width="0.8"/><path d="M4.5 6l5 9M9.5 6l-5 9" stroke="#fff" stroke-width="2.2"/></svg>
<div class="a" style="left:688px;top:766px;width:48px;height:2px;background:#76b9ed;"></div>
<svg class="a" style="left:747px;top:736px;" width="26" height="25" viewBox="0 0 26 25"><path d="M12 3C5 3 1 8 1 13c0 5 4 9 10 9 3 0 3-3 1-4-2-2 0-4 3-4h4c4 0 6-2 5-5-1-4-6-6-12-6z" fill="#e6e6e6"/><circle cx="7" cy="9" r="2" fill="#e8483a"/><circle cx="12" cy="7" r="2" fill="#3b8fd8"/><circle cx="6" cy="15" r="2" fill="#5ed069"/><path d="M24 1l-8 14 2 2 8-14z" fill="#d69a4a"/><path d="M16 15l-2 5 4-3z" fill="#444"/></svg>
<div class="a" style="left:741px;top:766px;width:40px;height:2px;background:#76b9ed;"></div>
<svg class="a" style="left:958px;top:736px;" width="24" height="24" viewBox="0 0 24 24"><defs><linearGradient id="sg" x1="0" y1="0" x2="1" y2="1"><stop offset="0" stop-color="#f7c230"/><stop offset="1" stop-color="#f06a10"/></linearGradient></defs><circle cx="10.5" cy="13" r="10" fill="url(#sg)"/><circle cx="19.5" cy="4" r="3.2" fill="#d83a2a"/></svg>
<div class="t" style="left:989.3px;top:743px;font-size:13px;color:#fff;;letter-spacing:-0.100px;">25°C</div>
<div class="t" style="left:1026.3px;top:743px;font-size:13px;color:#fff;;letter-spacing:0.383px;">Soleado</div>
<svg class="a" style="left:1092px;top:744px;" width="14" height="9" viewBox="0 0 14 9"><path d="M1 8l6-6 6 6" fill="none" stroke="#fff" stroke-width="1.3"/></svg>
<svg class="a" style="left:1117px;top:739px;" width="13" height="19" viewBox="0 0 13 19"><rect x="1.5" y="5.5" width="7" height="8" rx="1.5" fill="none" stroke="#fff"/><path d="M8.5 8l3-2v7l-3-2" fill="none" stroke="#fff"/><path d="M3 2.5q2-2 6 0M3 16.5q2 2 6 0" fill="none" stroke="#fff"/></svg>
<svg class="a" style="left:1138px;top:740px;" width="17" height="17" viewBox="0 0 17 17"><circle cx="8.5" cy="8.5" r="8" fill="#e6c619"/><circle cx="8.5" cy="8.5" r="6" fill="#3ca83c"/><path d="M8.5 4.5v8M4.5 8.5h8" stroke="#ffe14a" stroke-width="2.2"/></svg>
<svg class="a" style="left:1162px;top:740px;" width="18" height="17" viewBox="0 0 18 17"><rect x="4.5" y="1.5" width="13" height="10" fill="none" stroke="#fff"/><rect x="0.5" y="5.5" width="4" height="10" fill="none" stroke="#fff"/><path d="M9 15.5h6M11 11.5v4" stroke="#fff"/></svg>
<svg class="a" style="left:1186px;top:740px;" width="18" height="17" viewBox="0 0 18 17"><path d="M1.5 6h3l4-4v13l-4-4h-3z" fill="none" stroke="#fff"/><path d="M11 5.5q2 3 0 6M13.5 3.5q3.5 5 0 10M16 1.5q5 7 0 14" fill="none" stroke="#fff"/></svg>
<div class="t" style="left:1214px;top:744px;font-size:12px;color:#fff;;letter-spacing:-2.150px;">ESP</div>
<div class="t" style="left:1248.7px;top:734px;font-size:12px;color:#fff;;letter-spacing:-0.230px;">03:09 p. m.</div>
<div class="t" style="left:1248.7px;top:751px;font-size:12px;color:#fff;;letter-spacing:-0.222px;">25/01/2023</div>
<svg class="a" style="left:1324px;top:739px;" width="18" height="18" viewBox="0 0 18 18"><path d="M1.2 1.2h15.6v12.3h-5l-2.8 3-2.8-3h-5z" fill="none" stroke="#fff" stroke-width="1.4"/></svg>
<div class="a" style="left:1361px;top:728px;width:1px;height:40px;background:#5d6b80;"></div>
</body></html>
